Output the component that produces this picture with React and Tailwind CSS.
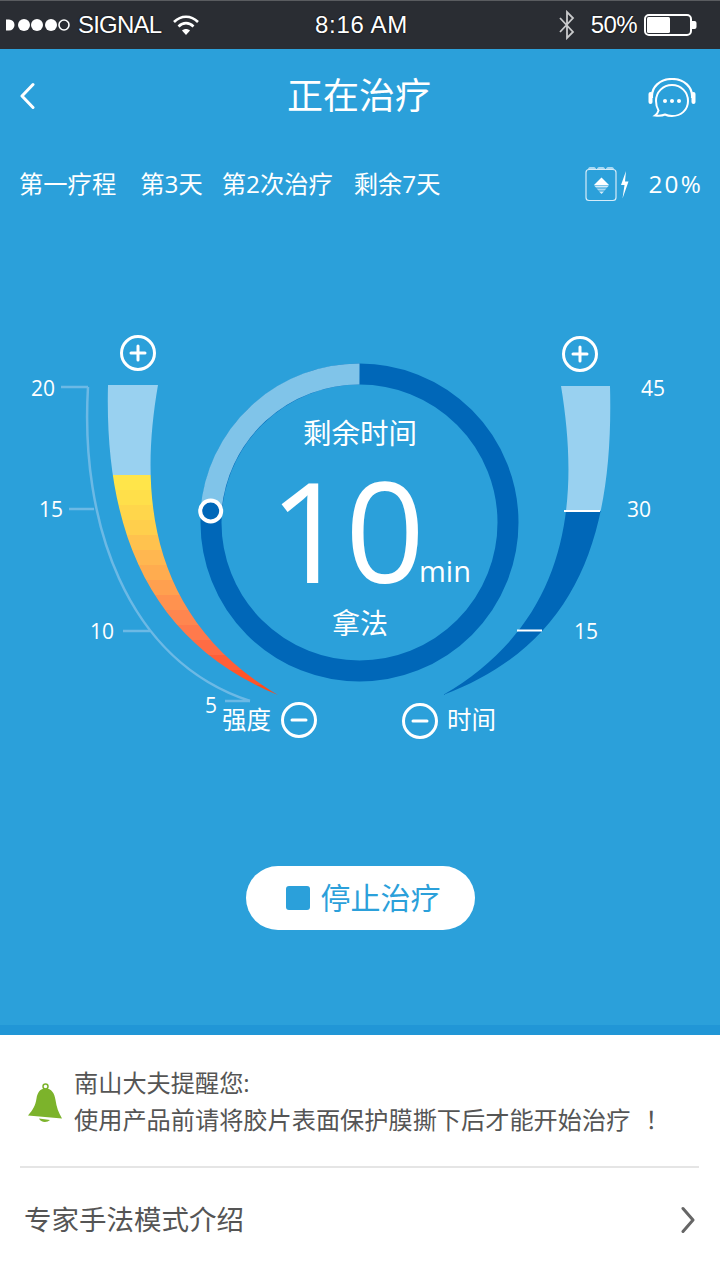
// App.jsx
const heatRows = [
  '#ffe54a', '#ffdf4a', '#ffd64b', '#ffcf4c', '#ffc24e', '#ffb750', '#ffac4f', '#ffa04f',
  '#ff924f', '#ff864f', '#ff7a4c', '#ff6c44', '#ff5f38', '#ff5428', '#ff4a18'
]

function StatusBar() {
  return (
    <div className="h-[49px] shrink-0 border-t border-[#5a5c60] bg-[#2a2d33] flex items-center justify-between relative text-white text-[24px] leading-none [font-family:'Liberation_Sans',sans-serif] [text-shadow:0_0_2px_#000]">
      <div className="flex items-center">
        <svg width="72" height="20" viewBox="0 0 72 20" fill="#fff" className="ml-[1px]">
          <path d="M5 4.500h3a5.500 5.500 0 0 1 0 11H5z" />
          <circle cx="23" cy="10" r="6" />
          <circle cx="36" cy="10" r="6" />
          <circle cx="50" cy="10" r="6" />
          <circle cx="63" cy="10" r="5" fill="none" stroke="#fff" strokeWidth="1.600" />
        </svg>
        <span className="ml-[5px] tracking-[-0.8px]">SIGNAL</span>
        <svg width="28" height="22" viewBox="0 0 28 22" fill="none" stroke="#fff" strokeWidth="2.600" className="ml-[11px]">
          <path d="M2 8c7-7 17-7 24 0" />
          <path d="M6.500 12.500c4.500-4.500 10.500-4.500 15 0" />
          <path d="M14 21l-4-4.500c2.400-2 5.600-2 8 0z" fill="#fff" stroke="none" />
        </svg>
      </div>
      <span className="absolute left-[315px] tracking-[0.7px]">8:16 AM</span>
      <div className="flex items-center">
        <svg width="20" height="30" viewBox="0 0 20 30" fill="none" stroke="#c9cacc" strokeWidth="1.800">
          <path d="M3 8l13 14-6 6V2l6 6L3 22" />
        </svg>
        <span className="ml-[14px] tracking-[-0.6px]">50%</span>
        <svg width="54" height="22" viewBox="0 0 54 22" fill="none" className="ml-[7px] mr-[22px]">
          <rect x="1" y="1" width="46" height="20" rx="4" stroke="#fff" strokeWidth="2" />
          <rect x="3" y="3" width="23" height="16" rx="1.500" fill="#fff" />
          <path d="M48 7h2.500a2 2 0 0 1 2 2v4a2 2 0 0 1-2 2H48z" fill="#fff" />
        </svg>
      </div>
    </div>
  )
}

function Header() {
  return (
    <div className="h-[94px] flex items-center justify-between relative pl-[19px] pr-[23px]">
      <svg width="16" height="28" viewBox="0 0 16 28" fill="none" stroke="#fff" strokeWidth="3" strokeLinecap="round" strokeLinejoin="round">
        <path d="M14 2.500L3 14l11 11.500" />
      </svg>
      <h1 className="absolute left-0 right-[2px] text-center text-[36px] font-normal leading-none text-white">正在治疗</h1>
      <svg width="50" height="40" viewBox="647 78 50 40" fill="none" stroke="#fff" strokeWidth="2" className="mt-[4px]">
        <path d="M652 98c-1-11 8-19 20-19s21 8 20 19" strokeWidth="2.200" />
        <rect x="648.500" y="92" width="4" height="12" rx="2" fill="#fff" stroke="none" />
        <rect x="691.500" y="92" width="4" height="12" rx="2" fill="#fff" stroke="none" />
        <path d="M656 101c0-9 7-16 16-16s16 7 16 16-7 15-16 15c-3 0-5-.5-7-1.500-2 1-5 1.500-10 1 2-1.500 3-3 3.500-5-1.600-2.500-2.500-6-2.500-9.500z" />
        <circle cx="665" cy="101" r="2" fill="#fff" stroke="none" />
        <circle cx="672" cy="101" r="2" fill="#fff" stroke="none" />
        <circle cx="679" cy="101" r="2" fill="#fff" stroke="none" />
      </svg>
    </div>
  )
}

function CourseInfo() {
  return (
    <div className="h-[40px] mt-[21px] pl-[19px] pr-[17px] flex items-center text-white text-[24.300px] leading-none">
      <span>第一疗程</span>
      <span className="ml-[24px]">第3天</span>
      <span className="ml-[19px]">第2次治疗</span>
      <span className="ml-[21px]">剩余7天</span>
      <svg width="46" height="36" viewBox="583 165 46 36" fill="none" className="ml-auto">
        <rect x="585" y="168.500" width="30" height="31" rx="3" stroke="#d5ecf9" strokeWidth="1.200" />
        <path d="M587 168c0-1 1-2 2-2h4c1 0 2 1 2 2zM596 168c0-1 1-2 2-2h4c1 0 2 1 2 2zM605 168c0-1 1-2 2-2h4c1 0 2 1 2 2z" fill="#a9d9f3" />
        <path d="M600.500 176.500l7.500 7.500h-15z" fill="#fff" />
        <path d="M593 184.500h15l-2 2h-11z" fill="#d5ecf9" />
        <path d="M595.500 187.500h10l-2 2h-6z" fill="#a9d9f3" />
        <path d="M598 190.500h5l-2.500 2.500z" fill="#d5ecf9" />
        <path d="M625 170l-5 14h3.500l-2 13.500 6-17h-3.500z" fill="#fff" />
      </svg>
      <span className="ml-[19px] tracking-[2.200px]">20%</span>
    </div>
  )
}

function RoundButton({ minus = false, className }) {
  return (
    <svg width="38" height="38" viewBox="0 0 38 38" fill="none" stroke="#fff" className={className}>
      <circle cx="19" cy="19" r="16.500" strokeWidth="3" />
      <path d="M12 19h14" strokeWidth="3" strokeLinecap="round" />
      {!minus && <path d="M19 12v14" strokeWidth="3" strokeLinecap="round" />}
    </svg>
  )
}

function Gauge() {
  return (
    <svg width="720" height="420" viewBox="0 340 720 420" fill="none" className="absolute left-0 top-0">
      <defs>
        <clipPath id="leftBand">
          <path d="M108 385C104 539 155 644 278 695C152 620 138 500 158 385Z" />
        </clipPath>
        <clipPath id="rightBand">
          <path d="M610 386C614 540 575 645 443 695C570 621 580 501 561 386Z" />
        </clipPath>
      </defs>

      {/* intensity scale */}
      <path d="M88 387C80 520 125 660 250 701" stroke="#6cb9e5" strokeWidth="2.500" />
      <path d="M61 387h27M69 509h25M123 631h27M225 701h25" stroke="#6cb9e5" strokeWidth="2.500" />

      {/* intensity band */}
      <g clipPath="url(#leftBand)">
        <rect x="100" y="385" width="70" height="90" fill="#99d1f0" />
        {heatRows.map((color, i) => (
          <rect key={color} x="100" y={475 + i * 15} width="190" height="15" fill={color} />
        ))}
      </g>

      {/* time band */}
      <g clipPath="url(#rightBand)">
        <rect x="550" y="386" width="70" height="125" fill="#99d1f0" />
        <rect x="430" y="511" width="190" height="190" fill="#0067b8" />
      </g>
      <path d="M564 511h36M517 630.500h25" stroke="#fff" strokeWidth="2" />

      {/* countdown ring */}
      <circle cx="359.500" cy="522.500" r="148.500" stroke="#0067b8" strokeWidth="21" />
      <path d="M359.500 374A148.500 148.500 0 0 0 211 511" stroke="#80c4e9" strokeWidth="21" />
      <circle cx="210.700" cy="511" r="10.500" fill="#0067b8" stroke="#fff" strokeWidth="4" />
    </svg>
  )
}

function Dial() {
  return (
    <div className="relative h-[420px] mt-[-40px] text-white">
      <Gauge />
      <RoundButton className="absolute left-[119px] top-[-6px]" />
      <RoundButton className="absolute left-[561px] top-[-5px]" />
      <RoundButton minus className="absolute left-[280px] top-[361px]" />
      <RoundButton minus className="absolute left-[401px] top-[362px]" />

      <span className="absolute left-[31px] top-[34px] text-[21px] leading-[28px]">20</span>
      <span className="absolute left-[39px] top-[155px] text-[21px] leading-[28px]">15</span>
      <span className="absolute left-[90px] top-[277px] text-[21px] leading-[28px]">10</span>
      <span className="absolute left-[205px] top-[351px] text-[21px] leading-[28px]">5</span>
      <span className="absolute left-[222px] top-[366px] text-[24.500px] leading-[28px]">强度</span>
      <span className="absolute left-[447px] top-[366px] text-[24.500px] leading-[28px]">时间</span>
      <span className="absolute left-[641px] top-[34px] text-[21px] leading-[28px]">45</span>
      <span className="absolute left-[627px] top-[155px] text-[21px] leading-[28px]">30</span>
      <span className="absolute left-[574px] top-[277px] text-[21px] leading-[28px]">15</span>

      <span className="absolute left-0 right-0 top-[73px] text-center text-[28.500px] leading-[40px]">剩余时间</span>
      <span className="absolute left-[269px] top-[139px] text-[140px] tracking-[-4px] leading-[100px]">10</span>
      <span className="absolute left-[419px] top-[213px] text-[29px] leading-[36px]">min</span>
      <span className="absolute left-0 right-0 top-[263px] text-center text-[28px] leading-[40px]">拿法</span>
    </div>
  )
}

function Bell() {
  return (
    <svg width="36" height="40" viewBox="0 0 36 40" fill="#7cb32b" className="ml-[27px] mt-[19px] shrink-0">
      <circle cx="18.500" cy="3.500" r="2.500" fill="none" stroke="#7cb32b" strokeWidth="1.500" />
      <path d="M18.500 5.500C13 5.500 10.500 9.500 9.500 15.500 8.500 22.500 5.500 27.500 1 32.500L35 35.500C31.500 29.500 29.500 24 28.500 17 27.500 10 24.500 5.500 18.500 5.500Z" />
      <path d="M12 35.500c1.500 4 8 4.500 11 1.500z" />
    </svg>
  )
}

export default function App() {
  return (
    <div className="w-[720px] h-[1280px] overflow-hidden flex flex-col bg-white [font-family:'Open_Sans','Noto_Sans_CJK_SC',sans-serif]">
      <StatusBar />
      <div className="flex-1 flex flex-col bg-[#2ba0da]">
        <Header />
        <CourseInfo />
        <div className="h-[176px]" />
        <Dial />
        <button className="self-center mt-[106px] w-[229px] h-[64px] pl-[6px] rounded-full bg-white flex items-center justify-center gap-[11px] text-[30px] leading-none text-[#2ba0da]">
          <span className="w-[24px] h-[24px] rounded-[3px] bg-[#2ba0da]" />
          停止治疗
        </button>
      </div>
      <div className="h-[10px] shrink-0 bg-[#2196d6]" />
      <div className="h-[245px] shrink-0 bg-white">
        <div className="flex h-[131px] pt-[29px] text-[24.200px] leading-[37px] text-[#555]">
          <Bell />
          <div className="ml-[11px]">
            <p>南山大夫提醒您:</p>
            <p>使用产品前请将胶片表面保护膜撕下后才能开始治疗<span className="ml-[15px]">！</span></p>
          </div>
        </div>
        <div className="mx-[20px] w-[679px] h-[2px] bg-[#e5e5e5]" />
        <div className="h-[104px] pl-[24px] pr-[25px] flex items-center justify-between text-[27.500px] leading-none text-[#555]">
          <span>专家手法模式介绍</span>
          <svg width="14" height="28" viewBox="0 0 14 28" fill="none" stroke="#666" strokeWidth="3" strokeLinecap="round" strokeLinejoin="round">
            <path d="M2 2.500L12 14 2 25.500" />
          </svg>
        </div>
      </div>
    </div>
  )
}
